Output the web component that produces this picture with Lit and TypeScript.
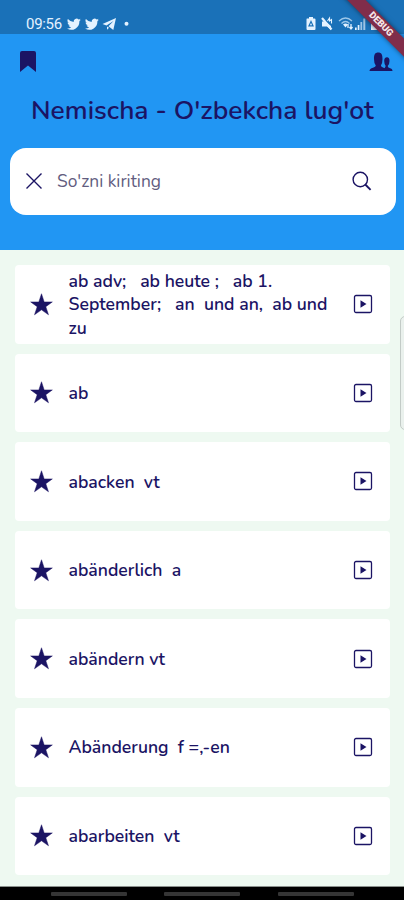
import { LitElement, html, css, svg } from "lit";
import { customElement, property } from "lit/decorators.js";

const ENTRIES: string[][] = [
  ["ab adv;   ab heute ;   ab 1.", "September;   an  und an,  ab und", "zu"],
  ["ab"],
  ["abacken  vt"],
  ["abänderlich  a"],
  ["abändern vt"],
  ["Abänderung  f =,-en"],
  ["abarbeiten  vt"],
];

const bird = svg`<path d="M23.6 4.900a9.600 9.600 0 0 1-2.800.8 4.800 4.800 0 0 0 2.100-2.700 9.700 9.700 0 0 1-3 1.200 4.900 4.900 0 0 0-8.300 4.400A13.800 13.800 0 0 1 1.600 3.500a4.900 4.900 0 0 0 1.500 6.500 4.800 4.800 0 0 1-2.200-.6 4.900 4.900 0 0 0 3.900 4.800 4.900 4.900 0 0 1-2.200.1 4.900 4.900 0 0 0 4.600 3.400A9.800 9.800 0 0 1 0 19.700a13.800 13.800 0 0 0 21.200-12.300c1-.7 1.800-1.500 2.400-2.500z"/>`;

@customElement("word-card")
export class WordCard extends LitElement {
  @property({ attribute: false }) lines: string[] = [];

  static styles = css`
    :host {
      display: flex;
      align-items: center;
      box-sizing: border-box;
      height: 78.6px;
      padding: 0 16.5px 0 15px;
      background: #fff;
      border-radius: 4px;
      color: #1b1464;
    }
    .star { width: 23px; height: 23px; flex: none; fill: #1b1464; }
    .word {
      flex: 1;
      margin-left: 15.500px;
      padding-top: 2px;
      font: 600 17.620px/23.700px Nunito, "Noto Sans", sans-serif;
      white-space: pre;
    }
    .line { display: block; }
    .play { width: 20px; height: 20px; flex: none; }
  `;

  render() {
    return html`
      <svg class="star" viewBox="0 0 24 24"><path d="M12 .8l2.800 8.500h8.500L16.500 14.300l2.800 8.400L12 17.600 4.700 22.700l2.800-8.400L.7 9.300h8.500z" stroke="#1b1464" stroke-width=".5" stroke-linejoin="round"/></svg>
      <div class="word">${this.lines.map((l) => html`<span class="line">${l}</span>`)}</div>
      <svg class="play" viewBox="0 0 20 20">
        <rect x="1.500" y="1.500" width="17" height="17" rx="1.500" fill="none" stroke="#1b1464" stroke-width="1.300"/>
        <path d="M7.500 6.300l6 3.700-6 3.700z" fill="#1b1464"/>
      </svg>
    `;
  }
}

@customElement("app-root")
export class AppRoot extends LitElement {
  static styles = css`
    :host {
      position: relative;
      display: flex;
      flex-direction: column;
      width: 404px;
      height: 900px;
      overflow: hidden;
      background: #eef9f1;
      color: #1b1464;
      font-family: Nunito, "Noto Sans", sans-serif;
    }
    .status {
      height: 33.500px;
      flex: none;
      box-sizing: border-box;
      padding: 15px 16px 0 26px;
      display: flex;
      justify-content: space-between;
      background: #1a71b8;
      color: #e4f2ff;
    }
    .group { display: flex; align-items: center; height: 18px; }
    .time { font: 400 15px/18px Roboto, sans-serif; letter-spacing: -0.300px; width: 41px; }
    .ico { fill: #e4f2ff; display: block; }
    .tw { width: 14px; height: 14px; margin-right: 3.500px; }
    .header {
      height: 216.500px;
      flex: none;
      box-sizing: border-box;
      padding: 15px 10px 0;
      background: #2196f3;
    }
    .actions { display: flex; justify-content: space-between; padding: 0 1px 0 10px; height: 26px; }
    .mark { width: 16px; height: 26px; }
    .people { width: 24px; height: 26px; }
    .title {
      margin: 15px 0 0 21px;
      height: 40px;
      font-weight: 600;
      font-size: 26.400px;
      line-height: 40px;
      white-space: nowrap;
    }
    .search {
      margin-top: 18px;
      width: 385.500px;
      height: 67px;
      box-sizing: border-box;
      padding: 0 24px 1px 15px;
      border-radius: 16px;
      background: #fff;
      display: flex;
      align-items: center;
    }
    .hint { flex: 1; margin-left: 14px; font-size: 17.400px; color: #625d80; font-weight: 400; }
    .list { flex: 1; padding: 15px 14.500px 0 15px; display: flex; flex-direction: column; gap: 10px; }
    .nav {
      height: 14px;
      flex: none;
      background: #000;
      border-top: 1px solid #8b918d;
      box-sizing: border-box;
      display: flex;
      justify-content: center;
      gap: 37.500px;
      padding-top: 5px;
    }
    .pill { width: 76px; height: 4px; border-radius: 1px; background: #353535; }
    .scroll {
      position: absolute;
      left: 400px;
      top: 316px;
      width: 10px;
      height: 114px;
      box-sizing: border-box;
      border: 1.500px solid #c3cbc7;
      border-radius: 5px;
      background: #eaf1ed;
    }
    .ribbon {
      position: absolute;
      left: 331px;
      top: 18px;
      width: 100px;
      height: 12.500px;
      transform: rotate(45deg);
      background: #802d4a;
      box-shadow: 0 0 5px rgba(0, 0, 0, 0.5);
      color: #f5e6e8;
      text-align: center;
      font: 900 9.500px/12.500px Roboto, sans-serif;
      letter-spacing: -0.100px;
    }
  `;

  render() {
    return html`
      <div class="status">
        <div class="group">
          <span class="time">09:56</span>
          <svg class="ico tw" viewBox="0 0 24 24">${bird}</svg>
          <svg class="ico tw" viewBox="0 0 24 24">${bird}</svg>
          <svg class="ico" width="15" height="14" viewBox="0 0 15 14"><path d="M14 1L0.500 7l4 1.500L11.500 4 6.500 9.200l4.800 3.800z"/><path d="M5 9.500v3.300l2-2z"/></svg>
          <svg class="ico" width="20" height="14" viewBox="0 0 20 14"><circle cx="9.500" cy="6.800" r="2"/></svg>
        </div>
        <svg class="ico" width="84" height="18" viewBox="0 0 84 18">
          <path d="M3 3.500h2V2h4v1.500h1.500q1 0 1 1V14q0 1-1 1h-7q-1 0-1-1V4.500q0-1 .5-1z"/>
          <path d="M7 6.500L5 10.800h4z" stroke="#1a71b8" stroke-width="1.200" fill="none"/>
          <path d="M18 6.500h3.500L27 11v4l-4-3.500h-5z"/>
          <path d="M18 3l9.500 11.500" stroke="#e4f2ff" stroke-width="2.200"/>
          <path d="M23.500 6l2-3v3l2-1.500v4" stroke="#e4f2ff" stroke-width="1.100" fill="none"/>
          <g fill="none" stroke="#9cc6e8" stroke-width="1.300"><path d="M35 6q6.500-6 13 0M37.500 8.500q4-4 8 0"/></g>
          <path d="M39 9.500q2.500-2.200 5 0l-2.500 3z"/><path d="M44 9v4M47 9v4.500M45.500 12l1.500 2 1.500-2" stroke="#e4f2ff" stroke-width="1.300" fill="none"/>
          <path d="M51 12.500h1.700V15H51zM53.700 10h1.700v5h-1.700z"/><path d="M56.400 7h1.800v8h-1.800zM59.300 3.500h2V15h-2z" opacity=".65"/>
          <path d="M68 3h2V1.500h4V3h2v12h-9V4z"/>
        </svg>
      </div>
      <div class="header">
        <div class="actions">
          <svg class="mark" viewBox="0 0 16 26"><path d="M0 23V4q0-2 2-2h12q2 0 2 2v19l-8-6.500z" fill="#1b1464"/></svg>
          <svg class="people" viewBox="0 0 24 26" fill="#1b1464">
            <path d="M14.300 22H23.500q0-2.400-3-3-1.800-.5-1.800-2 1.800-1.500 1.800-5Q20.500 8.300 18 8.300q-2.800 0-2.800 3.700 0 3 1.500 5z"/>
            <path d="M.5 22q0-2.500 3.500-3.300 2.800-.6 2.800-2.200Q5 14.500 5 10C5 5.500 6 3.500 9.200 3.500s4.300 2 4.300 6.500q0 4.500-1.600 6.500 0 1.600 2.600 2.200 3.300.8 3.300 3.300z"/>
          </svg>
        </div>
        <div class="title">Nemischa - O'zbekcha lug'ot</div>
        <div class="search">
          <svg width="18" height="18" viewBox="0 0 18 18"><path d="M1.500 1.500l15 15M16.500 1.500l-15 15" stroke="#1b1464" stroke-width="1.400"/></svg>
          <span class="hint">So'zni kiriting</span>
          <svg width="21" height="20" viewBox="0 0 21 20" fill="none" stroke="#1b1464"><circle cx="9.300" cy="8.500" r="7.200" stroke-width="1.400"/><path d="M14.300 13.500l5.300 5.300" stroke-width="1.900"/></svg>
        </div>
      </div>
      <div class="list">${ENTRIES.map((e) => html`<word-card .lines=${e}></word-card>`)}</div>
      <div class="nav"><div class="pill"></div><div class="pill"></div><div class="pill"></div></div>
      <div class="scroll"></div>
      <div class="ribbon">DEBUG</div>
    `;
  }
}
